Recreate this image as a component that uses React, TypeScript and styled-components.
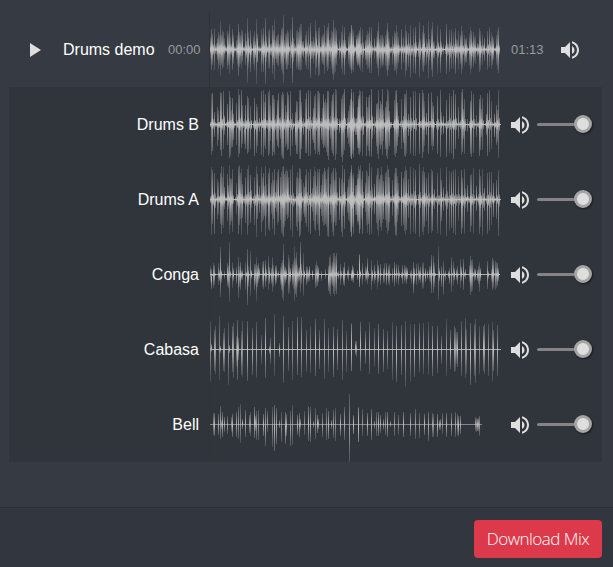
import React from "react";
import styled, { createGlobalStyle } from "styled-components";

const GlobalStyle = createGlobalStyle`
  * { box-sizing: border-box; }
  body { margin: 0; background: #363a42; font-family: "Liberation Sans", Arial, sans-serif; }
`;

const Page = styled.main`
  width: 613px;
  height: 567px;
  display: flex;
  flex-direction: column;
  background: #363a42;
  color: #fff;
  overflow: hidden;
`;

const Mixer = styled.section`
  padding: 12px 11px 0 9px;
  flex: 1;
`;

const MasterRow = styled.div`
  display: grid;
  grid-template-columns: 54px 105px 32px 9px 1px 291px 42px 1fr;
  align-items: center;
  height: 75px;
`;

const Stems = styled.div`
  background: #30343b;
`;

const StemRow = styled.div`
  display: grid;
  grid-template-columns: 190px 10px 1px 291px 7px 29px 1fr;
  align-items: center;
  height: 75px;
`;

const PlayButton = styled.button`
  display: flex;
  border: 0;
  padding: 1px 0 0 21px;
  background: none;
`;

const Title = styled.span`
  font-size: 16px;
  line-height: 18px;
  white-space: nowrap;
`;

const StemName = styled(Title)`
  text-align: right;
`;

const Time = styled.span<{ $inset?: number }>`
  padding-left: ${(p) => p.$inset ?? 0}px;
  font-size: 13px;
  line-height: 15px;
  color: #989a9e;
`;

const Playhead = styled.i`
  align-self: stretch;
  background: #303235;
`;

const MuteButton = styled.button<{ $inset?: number }>`
  display: flex;
  border: 0;
  padding: 1px 0 0 ${(p) => p.$inset ?? 0}px;
  background: none;
`;

const Slider = styled.div`
  display: flex;
  align-items: center;
  width: 55px;
  height: 18px;
  margin-top: -1px;
`;

const SliderTrack = styled.span`
  width: 38px;
  height: 3px;
  border-radius: 2px 0 0 2px;
  background: #858385;
`;

const SliderThumb = styled.span`
  width: 18px;
  height: 18px;
  margin-left: -1px;
  border: 3px solid #a5a5a5;
  border-radius: 50%;
  background: #dedede;
  box-shadow: 1px 1px 2px rgba(0, 0, 0, 0.55);
`;

const Footer = styled.footer`
  display: flex;
  justify-content: flex-end;
  height: 60px;
  padding: 12px 11px 0 0;
  border-top: 1px solid #2b2e32;
  background: #32363e;
`;

const DownloadButton = styled.button`
  width: 128px;
  height: 38px;
  padding: 0;
  border: 0;
  border-radius: 4px;
  background: #dc3a4b;
  color: #fff;
  font: 300 17px/38px "Open Sans", "Noto Sans", sans-serif;
  letter-spacing: -0.5px;
  white-space: nowrap;
`;

const Lane = styled.svg`
  display: block;
  width: 291px;
  height: 75px;
`;

/* Peaks are "x,top,bottom" in thirds of a pixel; each half has its own origin. */
type Track = {
  name: string;
  left: string;
  right: string;
  center: number;
  fill: number;
  ink: number;
  tip: number;
  end: number;
};

const master: Track = {
  name: "Drums demo",
  center: 133,
  fill: 0.5,
  ink: 0.8,
  tip: 0.2,
  end: 290,
  left: "16,95,160 19,70,195 22,85,180 28,68,195 34,112,150 37,98,165 40,80,190 43,90,178 46,48,212 49,88,180 52,74,192 55,80,184 58,98,160 67,76,190 70,85,180 73,55,205 76,95,165 82,70,195 85,90,175 94,105,160 97,88,182 100,57,212 103,80,185 106,88,175 109,70,190 112,78,170 120,82,180 127,38,232 130,80,188 136,75,200 145,92,175 148,78,195 154,40,236 157,86,170 163,120,146 169,72,200 172,90,175 175,68,200 181,37,236 184,92,170 190,78,188 193,70,190 202,58,205 205,75,180 208,40,224 214,93,172 217,88,178 220,85,185 226,90,175 229,70,195 232,65,205 235,30,234 241,90,175 244,84,195 247,75,190 250,80,180 256,70,188 262,36,232 268,112,156 274,78,190 277,72,185 280,80,195 283,65,195 286,57,198 289,56,195 295,108,158 301,90,178 304,76,190 310,65,195 316,52,218 322,108,160 325,94,175 331,45,210 334,78,187 340,67,213 343,65,210 349,95,170 352,90,175 355,85,180 358,60,205 364,75,184 367,65,198 370,52,190 376,98,170 379,75,190 382,79,207 385,45,225 388,68,205 391,65,200 394,75,180 403,102,160 409,80,190 412,60,205 418,65,210 421,105,160 430,92,175 433,80,185 436,82,190 439,60,195 442,70,195 445,93,165 454,100,160 457,88,182 460,95,175 463,78,184",
  right: "4,58,205 10,78,200 19,90,170 22,98,176 25,84,180 28,75,188 31,65,196 37,72,200 46,105,165 49,90,180 52,78,190 55,82,188 58,64,202 64,65,202 73,98,160 79,95,175 82,77,188 85,50,213 91,90,190 94,92,178 97,90,185 100,98,178 106,90,182 109,73,195 112,53,213 115,80,195 118,100,180 127,92,178 133,78,198 136,82,194 139,60,208 142,80,190 145,95,174 154,72,193 160,95,174 166,60,214 169,76,198 175,82,186 181,60,217 190,68,203 196,65,207 199,110,154 208,50,218 217,80,196 220,60,199 223,82,182 229,100,178 235,48,220 244,72,194 247,50,216 253,110,162 262,60,205 265,110,158 271,70,203 274,110,156 280,115,150 289,57,207 298,75,200 304,70,190 310,80,190 316,68,207 319,102,158 322,105,160 325,76,194 331,90,175 334,63,206 337,78,190 343,90,182 346,100,170 349,95,174 358,85,182 361,65,206 364,76,192 370,80,185 373,95,170 376,90,175 382,112,155 388,68,201 391,77,194 397,88,180 403,98,166 412,78,193 418,65,185 424,80,190 427,92,178 430,98,165 439,90,178 442,74,195 445,66,202",
};

const stems: Track[] = [
  {
    name: "Drums B",
    center: 118,
    fill: 0.24,
    ink: 0.74,
    tip: 0.3,
    end: 291,
    left: "19,27,210 22,24,198 28,80,155 37,65,181 40,75,165 46,19,195 49,24,213 55,16,192 58,90,148 67,55,178 73,18,218 76,34,211 79,75,188 82,38,185 85,85,165 94,52,178 100,12,215 103,30,205 109,14,189 112,60,176 118,100,175 121,60,190 127,31,206 130,39,200 136,62,190 139,105,130 148,38,213 154,56,202 157,66,183 163,98,139 169,16,210 175,14,214 178,50,182 181,26,190 190,20,213 193,15,205 196,60,168 202,30,213 205,28,199 208,40,208 214,88,164 217,45,182 220,23,189 226,94,162 229,28,213 232,20,217 235,25,221 241,60,185 244,80,175 247,20,195 250,30,190 256,16,212 262,83,182 271,80,178 274,48,206 277,51,207 283,15,220 286,14,221 289,50,192 295,98,150 301,42,204 304,22,204 310,14,213 316,18,211 322,96,165 325,68,174 328,32,194 331,26,206 337,18,205 340,18,201 343,24,210 349,98,163 352,68,176 355,25,189 358,50,183 361,40,187 364,53,200 367,18,211 370,16,223 376,93,160 379,47,195 382,29,203 385,22,212 391,12,223 394,14,206 403,100,143 409,40,216 412,28,231 415,24,209 418,12,194 427,98,158 430,76,175 433,60,186 436,40,214 439,23,221 442,47,207 445,67,193 454,98,148 457,65,189 460,32,205 463,15,190",
    right: "4,12,222 10,19,216 16,100,150 22,96,164 25,42,189 28,29,210 31,18,201 37,16,213 40,92,150 49,34,212 52,65,183 55,35,197 58,28,212 64,10,215 67,90,160 73,95,148 79,57,181 82,53,206 85,15,220 88,70,180 91,46,190 94,56,180 97,10,210 100,75,166 106,66,191 109,47,212 112,12,221 115,18,190 118,76,181 124,109,127 133,45,210 136,17,216 139,15,202 142,52,183 145,91,154 154,40,192 160,91,174 163,26,211 166,25,214 169,14,205 175,87,152 181,35,206 190,17,213 196,18,213 208,22,205 217,15,217 220,22,200 223,48,181 229,82,150 235,24,207 244,21,181 247,51,193 250,62,181 262,32,206 271,15,215 274,80,150 280,93,145 289,45,214 298,24,203 304,33,207 310,15,220 316,27,190 325,65,161 334,20,210 337,12,200 340,70,160 343,40,206 352,102,140 361,47,205 364,18,215 370,25,202 379,90,155 388,40,211 391,30,194 394,72,155 397,38,194 409,85,148 412,23,213 418,14,201 424,47,190 433,85,156 439,60,180 442,75,171 445,14,218",
  },
  {
    name: "Drums A",
    center: 343,
    fill: 0.3,
    ink: 0.72,
    tip: 0.26,
    end: 291,
    left: "19,246,450 22,255,415 28,262,447 37,282,402 40,290,390 46,264,415 49,243,445 52,275,420 55,244,428 58,304,371 67,265,406 70,300,370 73,240,445 76,278,419 79,280,408 82,250,440 94,292,388 100,245,445 103,240,419 106,263,400 109,252,448 112,295,397 121,275,414 127,251,448 130,240,418 136,268,414 139,313,368 148,276,419 154,243,455 157,265,400 163,302,382 169,246,440 172,276,411 175,262,403 178,301,393 181,243,452 184,297,395 190,263,432 193,248,438 199,292,386 202,260,430 205,285,400 208,250,448 214,285,381 217,260,420 220,252,411 226,274,403 229,261,444 232,246,450 235,241,455 238,265,425 241,257,408 244,252,388 247,257,402 250,276,395 256,250,433 262,238,454 268,333,360 274,275,424 277,260,436 280,278,409 283,247,454 286,250,448 289,280,406 295,294,385 298,306,394 301,270,412 304,252,425 310,260,440 316,250,446 322,308,380 325,271,408 328,246,430 331,258,436 334,301,389 337,250,416 340,261,434 343,252,452 349,299,393 352,266,409 355,261,423 358,248,418 361,258,415 364,280,425 367,250,453 370,246,456 376,295,390 379,264,413 382,257,439 385,248,452 388,283,411 391,248,423 394,260,420 403,276,403 409,280,440 412,240,456 415,291,393 418,252,430 427,306,382 430,280,405 433,273,409 436,260,441 439,250,453 442,270,424 445,278,419 454,298,389 457,281,407 460,242,420 463,256,447",
    right: "4,238,455 10,262,445 16,300,389 22,267,413 25,277,408 28,250,443 31,238,431 34,282,401 37,256,446 46,294,380 49,255,420 52,260,442 55,271,417 58,234,448 64,246,447 67,306,376 73,295,387 79,270,412 82,249,435 85,247,452 88,281,405 91,269,426 94,246,438 97,270,413 100,286,401 106,264,405 109,256,428 112,239,445 115,250,438 118,274,411 127,285,392 133,263,423 136,248,450 139,247,453 142,272,410 145,292,390 154,260,421 160,278,418 163,258,437 166,243,448 169,253,434 175,280,399 181,246,446 190,248,440 196,254,445 208,237,455 217,256,440 220,246,449 223,261,426 229,278,406 235,262,445 244,252,442 247,257,438 253,310,372 262,263,442 271,249,450 274,283,406 280,305,377 289,245,451 298,258,436 304,260,429 310,254,443 316,251,448 325,273,406 334,254,446 337,279,427 343,252,445 346,308,367 352,300,380 361,270,441 364,265,423 370,249,446 379,301,377 388,251,446 391,271,426 397,252,452 403,307,376 412,263,447 418,260,438 424,259,420 430,294,395 439,283,402 445,253,452",
  },
  {
    name: "Conga",
    center: 109,
    fill: 0.1,
    ink: 0.83,
    tip: 0.22,
    end: 290,
    left: "16,83,130 19,92,153 25,75,149 28,79,141 40,73,140 43,96,128 46,27,175 49,94,133 58,98,123 67,75,144 70,82,149 73,12,190 82,70,149 85,90,128 94,86,136 100,55,179 103,84,145 106,70,155 109,98,124 112,93,126 121,70,155 124,101,117 127,31,200 130,84,147 136,37,174 139,95,122 148,76,154 151,78,140 154,57,187 157,80,147 160,75,134 163,90,122 172,70,145 175,67,153 181,64,147 184,92,128 190,52,155 193,85,136 199,88,137 202,57,160 205,80,145 211,82,140 214,81,135 220,97,120 226,87,140 229,75,155 232,64,178 235,16,188 238,80,142 241,85,134 244,93,125 250,51,168 253,60,165 256,88,130 262,78,140 265,69,151 268,24,189 271,60,168 274,41,177 277,80,145 280,89,133 283,85,128 286,12,162 289,76,137 295,45,174 298,96,123 304,83,139 307,86,134 310,94,130 313,82,128 322,94,124 331,80,149 334,67,147 337,80,143 340,85,132 349,98,128 361,93,123 370,82,157 373,55,167 376,50,173 379,80,136 382,72,144 385,43,168 388,44,173 391,52,158 394,44,168 400,98,123 406,77,140 409,97,122 415,87,139 418,72,144 427,94,121 430,84,129 439,96,128 442,80,130 445,101,120 457,98,122 463,46,145",
    right: "7,94,124 10,85,133 22,96,125 28,50,147 31,95,122 37,75,140 46,83,130 49,90,126 52,60,137 55,98,123 64,65,155 67,95,129 73,80,136 76,98,126 82,66,153 85,80,132 91,77,140 100,88,134 103,75,134 109,75,141 115,82,136 118,78,142 127,90,134 133,72,143 139,78,133 145,79,140 148,99,121 154,102,120 157,80,138 163,81,134 166,84,128 169,85,136 172,90,123 181,99,122 184,91,138 190,71,165 193,88,136 199,76,141 205,74,134 208,96,126 211,85,133 217,75,152 220,72,149 226,90,132 232,96,123 238,84,128 241,83,135 244,50,163 250,52,164 253,74,147 265,24,186 268,90,128 274,84,146 280,68,169 286,94,127 295,99,119 298,90,137 304,57,161 310,68,142 313,90,126 319,93,124 322,84,141 331,62,148 334,85,128 340,61,156 346,91,123 358,80,134 361,54,169 364,64,162 367,63,157 373,88,130 376,91,125 382,94,128 385,82,137 388,72,161 391,88,129 412,67,152 415,99,121 424,92,130 427,58,155 430,64,149 436,67,155 439,70,150 442,75,143 445,90,128",
  },
  {
    name: "Cabasa",
    center: 334,
    fill: 0,
    ink: 0.82,
    tip: 0.24,
    end: 292,
    left: "16,247,430 19,318,340 28,276,398 31,262,408 43,234,426 46,322,343 55,284,397 58,269,402 70,252,441 73,321,345 82,262,402 85,254,418 94,292,385 97,246,426 100,300,365 109,279,410 112,248,417 127,247,429 142,268,411 154,250,420 169,290,377 181,238,419 193,324,347 196,298,376 208,226,412 223,314,357 235,232,434 250,265,399 262,247,426 277,235,411 289,237,417 304,274,400 316,262,405 331,242,414 343,276,391 358,241,423 370,269,401 385,266,417 397,272,394 412,244,425 424,278,402 439,256,398 451,308,350 454,307,356",
    right: "4,254,399 31,250,398 46,279,377 58,252,408 73,269,385 85,257,407 100,273,401 112,277,391 127,252,424 139,262,431 154,259,411 166,249,445 181,258,430 193,257,415 208,253,402 220,255,406 235,252,409 247,262,414 262,264,403 274,292,377 289,243,413 301,276,392 313,262,402 316,270,398 319,280,376 322,282,387 334,249,414 346,239,418 349,271,406 361,254,441 373,257,414 376,242,435 388,262,407 400,262,398 403,257,406 415,257,413 427,252,430 430,276,398 442,260,412",
  },
  {
    name: "Bell",
    center: 118,
    fill: 0,
    ink: 0.82,
    tip: 0.28,
    end: 272,
    left: "25,84,150 28,84,153 40,86,150 46,61,161 49,105,132 52,81,154 58,95,139 67,93,146 79,94,139 82,86,155 94,80,155 100,64,162 106,57,174 112,101,130 121,75,155 133,88,144 136,79,153 148,64,157 151,91,137 154,76,164 160,73,165 175,85,152 181,69,181 187,78,141 202,66,184 208,58,198 214,67,177 223,105,129 229,80,170 241,80,176 244,87,153 256,77,182 262,58,178 277,90,148 283,82,156 286,101,130 298,78,150 310,63,166 316,66,171 325,107,127 331,69,161 337,88,144 340,102,131 352,84,154 364,69,165 370,77,160 379,104,130 385,74,158 391,69,168 406,87,151 418,66,163 433,27,230 445,92,145 460,67,170",
    right: "10,90,147 25,66,170 37,72,152 52,82,152 64,70,164 73,106,130 79,81,153 85,80,153 91,89,142 100,101,133 106,80,150 112,80,154 121,108,125 133,79,152 145,88,148 160,79,156 181,84,152 196,70,160 208,84,158 223,85,149 235,79,166 247,82,154 250,87,155 262,86,155 268,105,133 271,100,133 277,82,145 289,84,154 304,84,152 316,80,154 322,87,149 325,91,153 331,91,145 376,96,136 379,98,140 382,100,137 385,97,137 388,91,151",
  },
];

function parseHalf(source: string, shift: number, center: number) {
  return source.split(" ").map((item) => {
    const [x, top, bottom] = item.split(",").map(Number);
    return {
      x: Math.floor((x + shift) / 3),
      up: (center - top) / 3,
      down: (bottom - center) / 3,
    };
  });
}

function Waveform({ track }: { track: Track }) {
  const gradient = `peak-${track.name.replace(" ", "-")}`;
  const peaks = [
    ...parseHalf(track.left, -15, track.center),
    ...parseHalf(track.right, 420, track.center),
  ];
  return (
    <Lane viewBox="0 0 291 75" shapeRendering="crispEdges" aria-label={track.name}>
      <defs>
        <linearGradient id={gradient} x1="0" y1="0" x2="0" y2="1">
          <stop offset="0" stopColor="#bfbfbf" stopOpacity={track.tip} />
          <stop offset="0.18" stopColor="#bfbfbf" stopOpacity={track.tip + 0.22} />
          <stop offset="0.38" stopColor="#bfbfbf" stopOpacity={track.ink} />
          <stop offset="0.5" stopColor="#bfbfbf" />
          <stop offset="0.62" stopColor="#bfbfbf" stopOpacity={track.ink} />
          <stop offset="0.82" stopColor="#bfbfbf" stopOpacity={track.tip + 0.22} />
          <stop offset="1" stopColor="#bfbfbf" stopOpacity={track.tip} />
        </linearGradient>
      </defs>
      {peaks.map((p, i) => {
        const tail = 0.08 + track.fill * (0.18 + ((i * 7) % 5) * 0.1);
        return (
          <g key={i} fill={`url(#${gradient})`}>
            <rect x={p.x} y={37.5 - p.up} width="1" height={p.up + p.down} opacity={0.68 + ((i * 11) % 4) * 0.105} />
            {track.fill > 0 && (
              <rect x={p.x + 1} y={37.5 - p.up * tail} width="1" height={(p.up + p.down) * tail} />
            )}
            {track.fill > 0.2 && (
              <rect x={p.x - 1} y={37.5 - p.up * tail * 0.7} width="1" height={(p.up + p.down) * tail * 0.7} />
            )}
          </g>
        );
      })}
      <rect x="0" y="37" width={track.end} height="1" fill="#bdbdbd" opacity={track.name === "Bell" ? 0.6 : 0.9} />
    </Lane>
  );
}

function SpeakerIcon() {
  return (
    <svg width="24" height="24" viewBox="0 0 24 24" fill="#dedede">
      <path d="M3 9v6h4l5 5V4L7 9H3zm13.5 3c0-1.77-1.02-3.29-2.5-4.03v8.05c1.48-.73 2.5-2.25 2.5-4.02zM14 3.23v2.06c2.89.86 5 3.54 5 6.71s-2.11 5.85-5 6.71v2.06c4.01-.91 7-4.49 7-8.77s-2.99-7.86-7-8.77z" />
    </svg>
  );
}

export default function App() {
  return (
    <Page>
      <GlobalStyle />
      <Mixer>
        <MasterRow>
          <PlayButton aria-label="Play">
            <svg width="11" height="14" viewBox="0 0 11 14">
              <path d="M0 0v14l11-7z" fill="#dedede" />
            </svg>
          </PlayButton>
          <Title>{master.name}</Title>
          <Time>00:00</Time>
          <span />
          <Playhead />
          <Waveform track={master} />
          <Time $inset={10}>01:13</Time>
          <MuteButton $inset={15} aria-label="Mute">
            <SpeakerIcon />
          </MuteButton>
        </MasterRow>
        <Stems>
          {stems.map((track) => (
            <StemRow key={track.name}>
              <StemName>{track.name}</StemName>
              <span />
              <Playhead />
              <Waveform track={track} />
              <span />
              <MuteButton aria-label={`Mute ${track.name}`}>
                <SpeakerIcon />
              </MuteButton>
              <Slider>
                <SliderTrack />
                <SliderThumb />
              </Slider>
            </StemRow>
          ))}
        </Stems>
      </Mixer>
      <Footer>
        <DownloadButton>Download Mix</DownloadButton>
      </Footer>
    </Page>
  );
}
